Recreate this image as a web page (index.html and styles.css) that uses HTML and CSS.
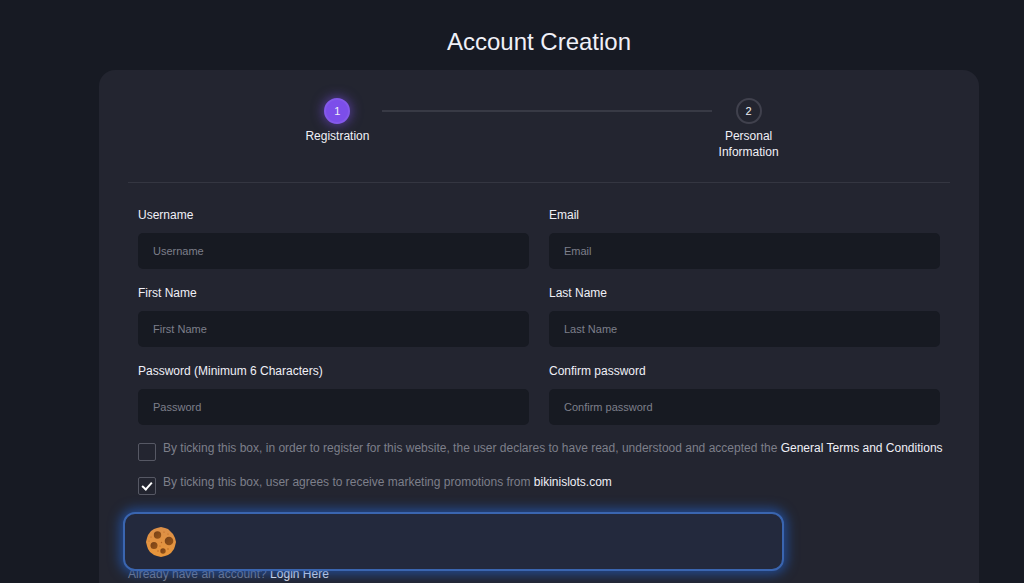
FILE: index.html
```html
<!DOCTYPE html>
<html lang="en">
<head>
<meta charset="utf-8">
<meta name="viewport" content="width=device-width, initial-scale=1">
<title>Account Creation</title>
<link rel="stylesheet" href="styles.css">
</head>
<body>
<main class="page">
  <h1 class="title">Account Creation</h1>
  <section class="card">
    <ol class="steps">
      <li class="step step-current" aria-current="step"><span class="step-number">1</span><span>Registration</span></li>
      <li class="step-line" role="presentation"></li>
      <li class="step step-next"><span class="step-number">2</span><span>Personal Information</span></li>
    </ol>
    <form class="form">
      <div class="fields">
        <div class="field"><label for="username">Username</label><input class="input" id="username" type="text" placeholder="Username"></div>
        <div class="field"><label for="email">Email</label><input class="input" id="email" type="email" placeholder="Email"></div>
        <div class="field"><label for="first">First Name</label><input class="input" id="first" type="text" placeholder="First Name"></div>
        <div class="field"><label for="last">Last Name</label><input class="input" id="last" type="text" placeholder="Last Name"></div>
        <div class="field"><label for="password">Password (Minimum 6 Characters)</label><input class="input" id="password" type="password" placeholder="Password"></div>
        <div class="field"><label for="confirm">Confirm password</label><input class="input" id="confirm" type="password" placeholder="Confirm password"></div>
      </div>
      <div class="consents">
        <div class="consent">
          <input class="check" id="terms" type="checkbox">
          <label for="terms">By ticking this box, in order to register for this website, the user declares to have read, understood and accepted the <a class="link" href="#terms">General Terms and Conditions</a></label>
        </div>
        <div class="consent">
          <input class="check" id="promo" type="checkbox" checked>
          <label for="promo">By ticking this box, user agrees to receive marketing promotions from <a class="link" href="#home">bikinislots.com</a></label>
        </div>
      </div>
    </form>
    <p class="login">Already have an account? <a class="link" href="#login">Login Here</a></p>
  </section>
</main>
<aside class="cookie-bar" aria-label="Cookies">
  <svg class="cookie" viewBox="0 0 30 30" aria-hidden="true">
    <defs>
      <linearGradient id="dough" x1="0" y1="0" x2="0" y2="1"><stop offset="0" stop-color="#dc8f48"/><stop offset="1" stop-color="#e8963a"/></linearGradient>
      <linearGradient id="chip" x1="0" y1="0" x2="1" y2="1"><stop offset="0" stop-color="#744018"/><stop offset="1" stop-color="#985417"/></linearGradient>
    </defs>
    <path fill="url(#dough)" d="M15 0l4 1 3 1 3 3 2 2 2 4 1 4-1 4-1 3-3 4-3 2-3 1-4 1-4-1-3-1-4-3-2-3-1-3-1-4 1-4 1-3 3-4 3-2 3-1z"/>
    <g fill="url(#chip)"><circle cx="11.500" cy="8" r="3.700"/><circle cx="23" cy="14" r="4.300"/><circle cx="8" cy="18.500" r="3.500"/><circle cx="17" cy="24" r="2.700"/></g>
    <g fill="#b76423"><circle cx="18" cy="5" r=".6"/><circle cx="22" cy="7" r=".6"/><circle cx="5" cy="10" r=".6"/><circle cx="15.500" cy="15.500" r=".7"/><circle cx="12" cy="24" r=".7"/><circle cx="22" cy="22" r=".7"/><circle cx="14" cy="19" r=".6"/><circle cx="3" cy="14" r=".5"/></g>
  </svg>
</aside>
</body>
</html>
```

FILE: styles.css
```css
* { box-sizing: border-box; }

body {
  margin: 0;
  background: #171a23;
  color: #f0f0f7;
  font: 12px/16px "Liberation Sans", Arial, sans-serif;
}

.page {
  display: flex;
  flex-direction: column;
  align-items: center;
  min-height: 100vh;
  padding: 27px 0 0 54px;
}

.title {
  margin: 0 0 13px;
  font-size: 24px;
  font-weight: 400;
  line-height: 30px;
}

.card {
  flex: 1;
  width: 100%;
  max-width: 880px;
  padding: 28px 29px 0;
  border-radius: 16px 16px 0 0;
  background: #232530;
}

.steps {
  display: flex;
  align-items: flex-start;
  min-height: 85px;
  margin: 0;
  padding: 0 20%;
  border-bottom: 1px solid #343641;
  list-style: none;
}

.step {
  display: flex;
  flex-direction: column;
  align-items: center;
  gap: 4px;
  text-align: center;
}

.step-current { width: 90px; }
.step-next { width: 74px; }

.step-number {
  display: grid;
  place-items: center;
  width: 26px;
  height: 26px;
  border: 2px solid #40414d;
  border-radius: 50%;
  font-size: 11px;
}

.step-current .step-number {
  border-color: #8459ea;
  background: #7c4eea;
  box-shadow: 0 0 12px 1px rgba(124, 78, 234, .6);
}

.step-line {
  flex: 1;
  height: 2px;
  margin-top: 12px;
  background: #383a45;
}

.form { padding: 24px 10px 0; }

.fields {
  display: grid;
  grid-template-columns: 1fr 1fr;
  gap: 16px 20px;
}

.field {
  display: flex;
  flex-direction: column;
  gap: 10px;
}

.input {
  width: 100%;
  height: 36px;
  padding: 0 15px;
  border: 0;
  border-radius: 5px;
  background: #171a22;
  color: #f0f0f7;
  font: 11px/16px "Liberation Sans", Arial, sans-serif;
}

.input::placeholder { color: #7d7f8a; opacity: 1; }

.consents {
  display: grid;
  gap: 18px;
  margin: 15px -10px 0 0;
}

.consent {
  display: flex;
  align-items: flex-start;
  gap: 7px;
  height: 16px;
  color: #7d7f8a;
}

.check {
  flex: none;
  display: grid;
  place-items: center;
  appearance: none;
  width: 18px;
  height: 18px;
  margin: 3px 0 0;
  border: 1px solid #565864;
  border-radius: 2px;
}

.check:checked::after {
  content: "";
  width: 8px;
  height: 4px;
  border: solid #fff;
  border-width: 0 0 2px 2px;
  transform: translateY(-1px) rotate(-48deg);
}

.link {
  color: #f0f0f7;
  text-decoration: none;
}

.login {
  margin: 76px 0 0;
  color: #7d7f8a;
}

.cookie-bar {
  position: fixed;
  bottom: 12px;
  left: 12%;
  display: flex;
  align-items: center;
  width: 661px;
  max-width: 80%;
  height: 59px;
  padding: 0 21px;
  border: 2px solid #3a65b0;
  border-radius: 12px;
  background: #23293d;
  box-shadow: 0 0 12px 3px rgba(34, 91, 190, .7);
}

.cookie {
  width: 30px;
  height: 30px;
}
```
